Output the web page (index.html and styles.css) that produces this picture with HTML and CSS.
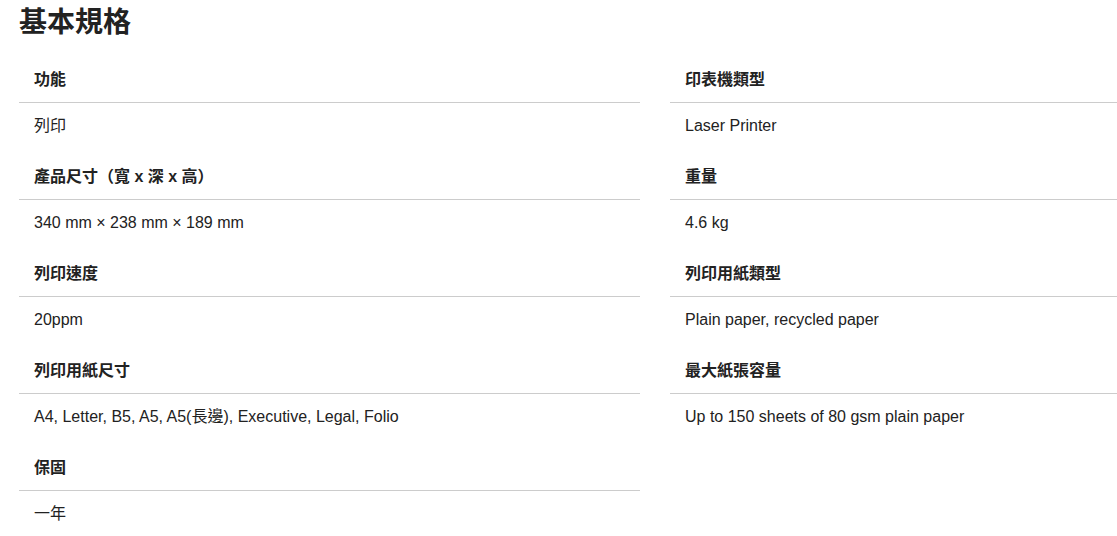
FILE: index.html
```html
<!DOCTYPE html>
<html lang="zh-Hant">
<head>
<meta charset="utf-8">
<link rel="stylesheet" href="styles.css">
</head>
<body>
<div class="page">
  <h2 class="title">基本規格</h2>
  <div class="specs">
    <div class="col">
      <div class="item"><div class="label">功能</div><div class="value">列印</div></div>
      <div class="item"><div class="label">產品尺寸（寬 x 深 x 高）</div><div class="value">340 mm × 238 mm × 189 mm</div></div>
      <div class="item"><div class="label">列印速度</div><div class="value">20ppm</div></div>
      <div class="item"><div class="label">列印用紙尺寸</div><div class="value">A4, Letter, B5, A5, A5(長邊), Executive, Legal, Folio</div></div>
      <div class="item"><div class="label">保固</div><div class="value">一年</div></div>
    </div>
    <div class="col">
      <div class="item"><div class="label">印表機類型</div><div class="value">Laser Printer</div></div>
      <div class="item"><div class="label">重量</div><div class="value">4.6 kg</div></div>
      <div class="item"><div class="label">列印用紙類型</div><div class="value">Plain paper, recycled paper</div></div>
      <div class="item"><div class="label">最大紙張容量</div><div class="value">Up to 150 sheets of 80 gsm plain paper</div></div>
    </div>
  </div>
</div>
</body>
</html>
```
FILE: styles.css
```css
html, body {
  margin: 0;
  padding: 0;
  background: #fff;
}
body {
  font-family: "Liberation Sans", "Noto Sans CJK TC", sans-serif;
  color: #222;
}
.page {
  padding-left: 19px;
}
.title {
  margin: 0;
  padding-top: 6px;
  font-size: 28px;
  line-height: 34px;
  font-weight: 700;
  height: 54px;
  box-sizing: border-box;
}
.specs {
  display: grid;
  grid-template-columns: 621px 1fr;
  column-gap: 30px;
}
.label {
  padding: 15px 15px 11px;
  font-size: 16px;
  line-height: 22px;
  font-weight: 700;
  border-bottom: 1px solid #ccc;
}
.value {
  padding: 12px 15px 14px;
  font-size: 16px;
  line-height: 22px;
}
```
